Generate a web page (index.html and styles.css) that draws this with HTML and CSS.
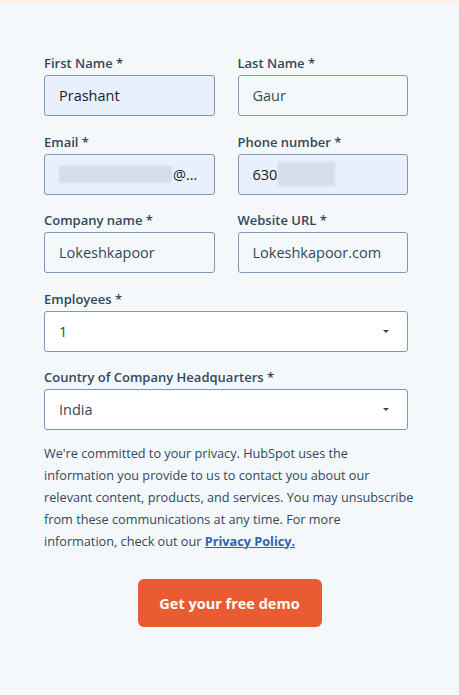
FILE: index.html
```
<!DOCTYPE html>
<html>
<head>
<meta charset="utf-8">
<link rel="stylesheet" href="styles.css">
</head>
<body>
<div class="topbar"></div>
<form class="form">
  <div class="row two">
    <div class="field">
      <label class="label">First Name *</label>
      <div class="input filled">Prashant</div>
    </div>
    <div class="field">
      <label class="label">Last Name *</label>
      <div class="input">Gaur</div>
    </div>
  </div>
  <div class="row two">
    <div class="field">
      <label class="label">Email *</label>
      <div class="input filled email"><span class="blur blur-email"></span><span class="email-tail">@…</span></div>
    </div>
    <div class="field">
      <label class="label">Phone number *</label>
      <div class="input filled"><span>630</span><span class="blur blur-phone"></span></div>
    </div>
  </div>
  <div class="row two">
    <div class="field">
      <label class="label">Company name *</label>
      <div class="input">Lokeshkapoor</div>
    </div>
    <div class="field">
      <label class="label">Website URL *</label>
      <div class="input">Lokeshkapoor.com</div>
    </div>
  </div>
  <div class="row">
    <div class="field">
      <label class="label">Employees *</label>
      <div class="input select">1<span class="caret"></span></div>
    </div>
  </div>
  <div class="row">
    <div class="field">
      <label class="label">Country of Company Headquarters *</label>
      <div class="input select">India<span class="caret"></span></div>
    </div>
  </div>
  <p class="legal">We're committed to your privacy. HubSpot uses the<br>information you provide to us to contact you about our<br>relevant content, products, and services. You may unsubscribe<br>from these communications at any time. For more<br>information, check out our <a class="link" href="#">Privacy Policy.</a></p>
  <div class="actions">
    <button type="button" class="btn">Get your free demo</button>
  </div>
</form>
</body>
</html>
```
FILE: styles.css
```
html, body {
  margin: 0;
  padding: 0;
}
body {
  background: #f5f8fb;
  font-family: "Open Sans", "Noto Sans", sans-serif;
  color: #33475b;
  width: 459px;
  height: 695px;
  overflow: hidden;
}
.topbar {
  height: 2px;
  background: #fdefe6;
}
.form {
  padding: 51px 51px 0 44px;
  display: flex;
  flex-direction: column;
  gap: 15.5px;
}
.row {
  display: flex;
  gap: 23px;
}
.row .field {
  flex: 1;
  display: flex;
  flex-direction: column;
}
.label {
  font-size: 13px;
  font-weight: 600;
  line-height: 20px;
  margin-bottom: 2px;
  color: #33475b;
}
.input {
  box-sizing: border-box;
  height: 41px;
  border: 1px solid #7c98b6;
  border-radius: 3px;
  background: #f5f8fa;
  padding: 0 14px;
  display: flex;
  align-items: center;
  font-size: 14.5px;
  color: #33475b;
}
.input.filled {
  background: #e8f0fe;
  color: #1b1b1b;
}
.blur {
  display: inline-block;
  background: #d6dce8;
  filter: blur(1px);
}
.blur-email {
  width: 113px;
  height: 17px;
}
.email-tail {
  margin-left: 1px;
}
.blur-phone {
  width: 57px;
  height: 24px;
  margin-left: 1px;
}
.select {
  background: #ffffff;
  justify-content: space-between;
}
.caret {
  width: 0;
  height: 0;
  border-left: 3px solid transparent;
  border-right: 3px solid transparent;
  border-top: 3px solid #33475b;
  margin-right: 4px;
}
.legal {
  margin: -4px -10px 0 0;
  font-size: 12.7px;
  line-height: 22px;
  white-space: nowrap;
  color: #33475b;
}
.link {
  font-weight: 700;
  color: #2d63b0;
  text-decoration: underline;
}
.actions {
  display: flex;
  justify-content: center;
  margin-top: 12px;
  margin-right: -7px;
}
.btn {
  width: 184px;
  height: 48px;
  border: none;
  border-radius: 6px;
  background: #e95b32;
  color: #ffffff;
  font-family: "Open Sans", "Noto Sans", sans-serif;
  font-size: 14.5px;
  font-weight: 700;
}
```
